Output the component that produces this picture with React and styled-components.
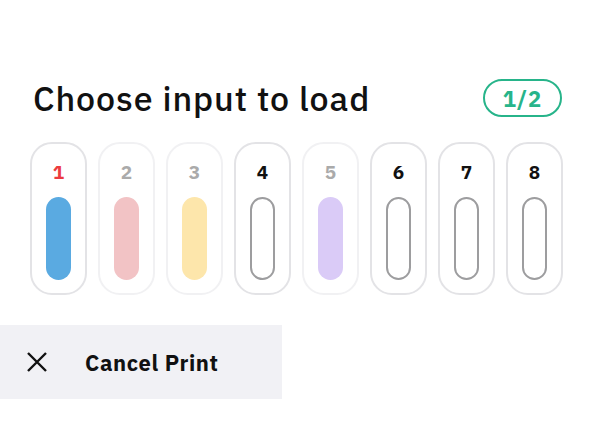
import styled, { createGlobalStyle } from "styled-components";

const GlobalStyle = createGlobalStyle`
  body {
    margin: 0;
    background: #ffffff;
    font-family: "IBM Plex Sans", Inter, "Noto Sans", sans-serif;
  }
`;

const Page = styled.div`
  width: 592px;
  height: 444px;
  padding-top: 77px;
  box-sizing: border-box;
`;

const Header = styled.div`
  display: flex;
  justify-content: space-between;
  align-items: center;
  padding: 0 30px 0 33px;
`;

const Title = styled.h1`
  margin: 0;
  font-size: 34px;
  line-height: 42px;
  font-weight: 500;
  color: #111;
  letter-spacing: 0.9px;
`;

const Badge = styled.div`
  width: 79px;
  height: 38px;
  box-sizing: border-box;
  border: 2.5px solid #27b48a;
  border-radius: 20px;
  display: flex;
  align-items: center;
  justify-content: center;
  color: #27b48a;
  font-size: 22px;
  font-weight: 700;
  letter-spacing: 1px;
`;

const Slots = styled.div`
  display: flex;
  gap: 11px;
  padding-left: 30px;
  margin-top: 23px;
`;

const Slot = styled.div`
  width: 57px;
  height: 153px;
  box-sizing: border-box;
  border: 2px solid ${(p) => (p.$muted ? "#f1f1f3" : "#e3e3e6")};
  border-radius: 22px;
  display: flex;
  flex-direction: column;
  align-items: center;
  padding-top: 16px;
`;

const Num = styled.div`
  font-size: 19px;
  font-weight: 700;
  line-height: 24px;
  color: ${(p) => p.$color};
`;

const Pill = styled.div`
  margin-top: 13px;
  width: 25px;
  height: 83px;
  box-sizing: border-box;
  border-radius: 13px;
  background: ${(p) => p.$fill || "transparent"};
  border: ${(p) => (p.$fill ? "none" : "2px solid #9d9d9f")};
`;

const CancelButton = styled.button`
  margin-top: 30px;
  width: 282px;
  height: 74px;
  border: none;
  background: #f1f1f5;
  display: flex;
  align-items: center;
  gap: 37px;
  padding: 0 0 0 26px;
  font-family: inherit;
  font-size: 22px;
  font-weight: 700;
  letter-spacing: 0.6px;
  color: #111;
  cursor: pointer;
`;

const slots = [
  { n: 1, color: "#ec3b3f", fill: "#5aaae1" },
  { n: 2, color: "#aaaaaa", fill: "#f2c3c5", muted: true },
  { n: 3, color: "#aaaaaa", fill: "#fde6ab", muted: true },
  { n: 4, color: "#111" },
  { n: 5, color: "#aaaaaa", fill: "#dacbf7", muted: true },
  { n: 6, color: "#111" },
  { n: 7, color: "#111" },
  { n: 8, color: "#111" },
];

export default function App() {
  return (
    <Page>
      <GlobalStyle />
      <Header>
        <Title>Choose input to load</Title>
        <Badge>1/2</Badge>
      </Header>
      <Slots>
        {slots.map((s) => (
          <Slot key={s.n} $muted={s.muted}>
            <Num $color={s.color}>{s.n}</Num>
            <Pill $fill={s.fill} />
          </Slot>
        ))}
      </Slots>
      <CancelButton>
        <svg width="22" height="22" viewBox="0 0 22 22">
          <path d="M2 2 L20 20 M20 2 L2 20" stroke="#111" strokeWidth="2.4" fill="none" />
        </svg>
        Cancel Print
      </CancelButton>
    </Page>
  );
}
